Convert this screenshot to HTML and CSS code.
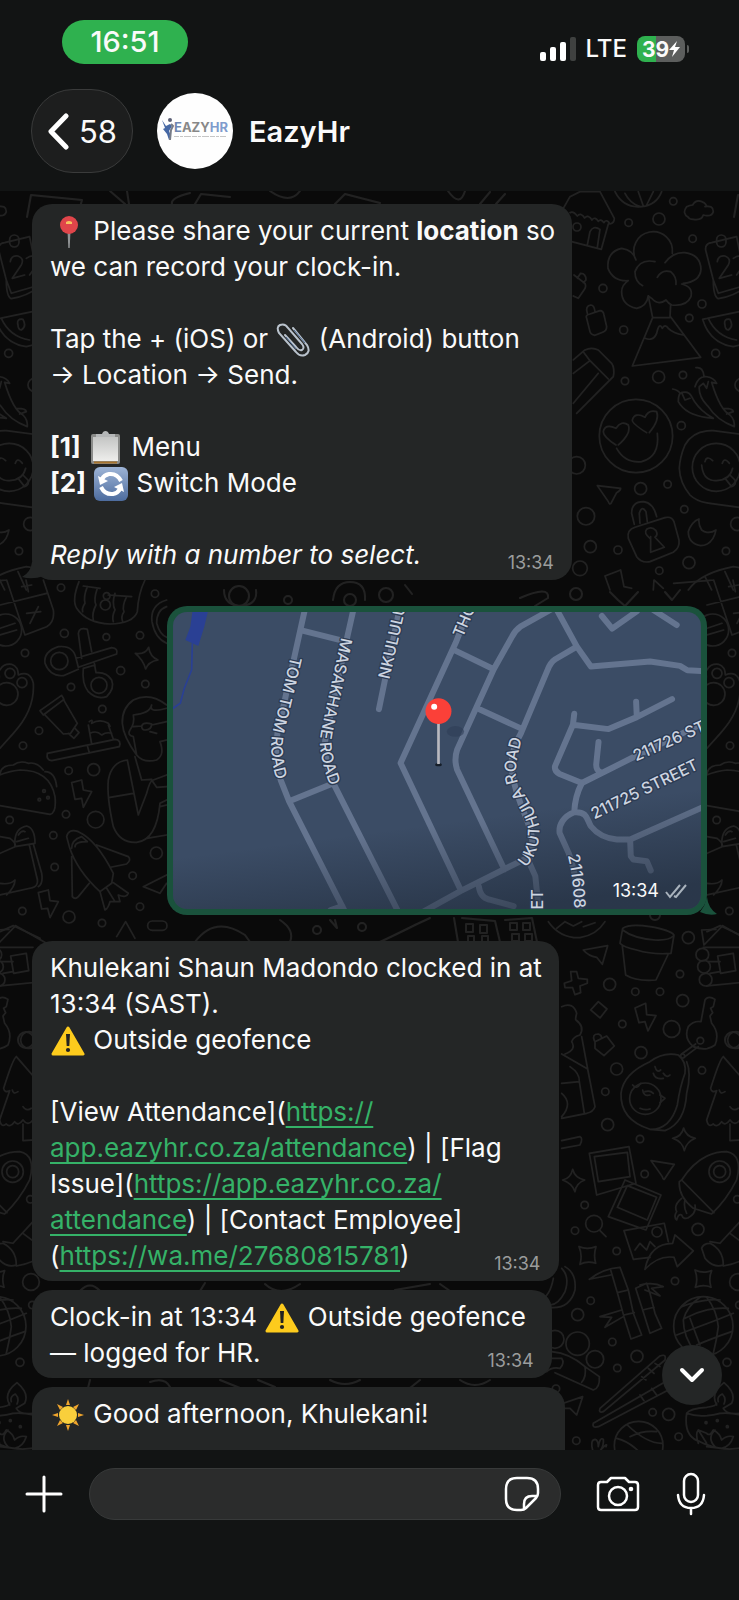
FILE: index.html
```html
<!DOCTYPE html>
<html lang="en">
<head>
<meta charset="utf-8">
<meta name="viewport" content="width=device-width, initial-scale=1">
<title>EazyHr</title>
<link rel="stylesheet" href="styles.css">
</head>
<body>
<svg class="defs" aria-hidden="true">
  <defs>
    <symbol id="warning" viewBox="0 0 34 34">
      <path d="M17 4L32 30H2Z" fill="#fdcb1d" stroke="#fdcb1d" stroke-width="3" stroke-linejoin="round"/>
      <path d="M15 10h4l-.7 12h-2.6z" fill="#222"/><circle cx="17" cy="26" r="2.1" fill="#222"/>
    </symbol>
    <linearGradient id="sky" x2="0" y2="1"><stop offset="0" stop-color="#9db4d6"/><stop offset="1" stop-color="#4d6c9e"/></linearGradient>
    <linearGradient id="paper" x2="0" y2="1"><stop offset="0" stop-color="#c4c5c4"/><stop offset="1" stop-color="#eeeeec"/></linearGradient>
    <linearGradient id="shade" x1=".55" y1=".7" x2=".62" y2="1"><stop offset="0" stop-color="#1c2634" stop-opacity="0"/><stop offset="1" stop-color="#1c2634" stop-opacity=".55"/></linearGradient>
    <g id="doodles">
      <g transform="translate(380 190) scale(.3333)">
        <path d="M550 55L570 20L600 5H660L703 85Q703 100 690 102Q680 85 672 98Q662 85 655 94Q645 78 636 90Q625 72 614 84Q603 66 592 78Q580 62 570 68M685 102L664 178L575 155M622 165L630 125Q640 105 660 118L652 172"/>
        <circle cx="591" cy="111" r="12"/>
        <path d="M705 5Q730 55 785 50Q830 45 845 5M735 10Q750 40 780 50M775 5L790 48M820 5L800 45"/>
        <path d="M925 82Q905 70 920 50Q930 45 938 45Q950 25 972 38Q985 50 975 50Q1000 45 1000 65Q995 82 970 75Q965 92 940 88Q928 88 925 82"/>
        <path d="M768 210A58 58 0 1 1 877 190M855 218Q880 185 915 188Q962 195 963 238Q960 275 910 280M905 282Q940 290 933 320Q920 350 875 345Q865 340 858 330Q835 348 815 325L805 318Q800 350 770 355Q725 345 725 305Q725 285 745 272Q700 275 684 235Q680 185 725 175Q760 180 768 210M825 215Q780 205 765 245Q765 275 788 287M832 262Q845 238 872 245Q890 260 888 283"/>
        <path d="M805 318L818 383H870L872 345M818 383L757 528L962 502L870 378M795 445Q820 455 830 430Q838 395 847 415Q855 400 865 415Q880 430 910 435"/>
        <path d="M977 180Q975 160 995 158L1070 140L1100 290Q1060 320 1015 326Q1000 320 1000 270L977 180M1000 270L1015 310L1100 285M1012 215Q1015 195 1035 198Q1055 205 1045 225L1018 265L1055 255M1060 205Q1090 185 1095 220L1070 255"/>
        <rect x="1010" y="135" width="28" height="36" rx="14"/>
        <path d="M968 388L1150 350M968 388Q990 460 1060 470Q1110 460 1140 440M985 385Q1010 440 1070 450M1035 405Q1030 385 1050 388Q1062 410 1045 420Q1035 418 1035 405"/>
        <path d="M582 255L615 280Q620 290 612 300L595 325L580 318M592 265L602 250Q618 250 618 270L610 278M620 385Q615 375 630 372L660 362Q670 362 672 375L680 410Q680 422 668 427L645 436Q632 434 630 425ZM622 370Q615 348 632 345Q643 345 645 365"/>
        <path d="M580 510L615 480Q635 470 655 480L695 520Q705 535 700 560L685 575L590 670M580 550L630 512L612 488M630 512L685 567M580 640L655 550"/>
        <circle cx="768" cy="738" r="110"/>
        <path d="M708 765Q670 740 670 725Q675 700 708 715Q725 690 745 705Q755 730 715 765M800 728Q755 700 757 690Q765 665 795 682Q805 658 830 665Q840 690 808 728M710 775Q735 820 785 815Q840 800 832 730"/>
        <path d="M948 533Q970 530 972 560M945 590Q955 560 975 560Q1000 560 1010 580L995 577Q1020 660 1050 675Q1065 690 1063 710Q1010 690 985 650Q955 620 958 590L970 580L980 595L985 575M878 597Q895 600 900 610Q925 600 935 620Q955 660 1000 685Q920 680 895 635Q895 610 905 608L915 630L930 625M1030 655Q1060 655 1060 665L1040 672"/>
        <path d="M1100 735L1000 722Q940 720 915 765Q900 800 898 835Q900 880 930 915Q950 935 990 940L1100 955"/>
        <circle cx="1009" cy="832" r="72"/>
        <path d="M975 815Q980 795 998 812M1027 820Q1033 800 1048 820M965 825Q970 875 1010 872Q1050 870 1058 835M1035 865L1055 890Q1070 885 1065 870L1050 855"/>
        <path d="M652 887L722 895Q722 902 710 908L693 940Q688 945 685 935Z"/>
        <path d="M763 1003L755 970Q755 935 790 935Q820 938 830 980M780 1000L778 970Q785 945 798 965L802 995M745 1045Q740 1020 765 1012L855 983Q875 978 882 995L897 1050Q900 1075 880 1087L810 1115Q785 1120 770 1100ZM810 1045Q790 1030 800 1018Q815 1008 828 1022Q835 1035 825 1042L853 1072L812 1087L812 1040"/>
        <path d="M957 987Q935 995 925 1025Q925 1060 962 1067Q1000 1065 1008 1020Q985 1035 965 1020Q955 1005 957 987M675 1158L722 1140L732 1190L755 1195M675 1158L690 1200M820 1200L822 1170L850 1195M925 1200Q960 1150 1060 1130L1090 1135M975 1160L995 1200M1035 1145L1060 1200"/>
        <g><circle cx="746" cy="98" r="11"/><circle cx="837" cy="87" r="18"/><circle cx="880" cy="34" r="11"/><circle cx="938" cy="146" r="11"/><circle cx="669" cy="295" r="12"/><circle cx="966" cy="342" r="12"/><circle cx="928" cy="384" r="11"/><circle cx="731" cy="420" r="12"/><circle cx="1007" cy="490" r="12"/><circle cx="735" cy="573" r="11"/><circle cx="836" cy="561" r="18"/><circle cx="909" cy="555" r="11"/><circle cx="904" cy="707" r="12"/><circle cx="590" cy="826" r="26"/><circle cx="782" cy="896" r="18"/><circle cx="863" cy="883" r="11"/><circle cx="618" cy="979" r="26"/><circle cx="913" cy="958" r="11"/><circle cx="631" cy="1070" r="18"/><circle cx="714" cy="1080" r="12"/><circle cx="1038" cy="1083" r="11"/><circle cx="927" cy="1118" r="18"/><circle cx="838" cy="1142" r="11"/><circle cx="600" cy="1135" r="22"/><circle cx="1072" cy="1002" r="20"/><circle cx="1085" cy="585" r="20"/></g>
      </g>
      <g transform="translate(0 580) scale(.3333)">
        <path d="M20 0L75 165M0 75L140 40M75 165L140 140Q165 125 160 90L130 0M65 20L95 15M78 0L85 35M80 100L122 95M90 130L115 80M0 145L45 130M0 165L50 150M-100 10L20 0"/>
        <circle cx="17" cy="150" r="48"/>
        <path d="M237 5Q215 60 230 85Q260 130 330 132Q400 130 412 95Q415 40 435 0M250 18L300 25M325 45L395 50M262 20Q250 50 255 70Q245 85 248 95M292 25Q280 60 288 75Q275 100 280 120M345 40Q335 70 345 90Q335 110 340 125M380 50Q365 80 372 95Q362 110 368 125"/>
        <circle cx="320" cy="48" r="10"/><circle cx="316" cy="75" r="15"/>
        <path d="M500 60Q450 75 456 125Q465 175 500 190M500 80Q470 90 470 130Q480 165 500 172"/>
        <path d="M235 160Q238 140 262 148L275 215M235 160L245 235M228 235L335 203Q355 205 350 222L235 262ZM228 235Q220 195 175 200Q130 215 135 250Q150 290 190 287L235 268M250 265Q245 310 265 335Q290 360 320 350Q345 325 335 300Q320 275 288 278L283 250M250 265L285 255"/>
        <circle cx="178" cy="243" r="26"/><circle cx="297" cy="316" r="24"/>
        <path d="M446 202Q450 230 474 240Q445 245 437 267Q430 240 406 220Q435 225 446 202Z"/>
        <path d="M0 270Q10 250 35 253Q55 260 55 285Q90 270 100 310Q105 390 40 460L0 505M-100 330Q-110 400 -60 470L0 505"/><circle cx="30" cy="280" r="15"/><circle cx="66" cy="308" r="15"/><circle cx="20" cy="342" r="34"/><circle cx="-18" cy="290" r="16"/>
        <path d="M120 392L185 346L192 358L130 405ZM135 405L190 462L212 460L232 430L190 358M205 460L222 475L237 458L225 445"/>
        <path d="M142 520L345 478Q365 480 358 500L155 542Q138 540 142 520M262 497L268 518M268 425Q280 415 275 430Q300 415 325 430Q335 445 325 435L340 478M265 435L275 492M270 460Q290 450 305 465Q320 455 335 460"/>
        <path d="M500 375Q450 335 400 360Q365 385 367 430Q370 470 410 525M400 405Q405 430 390 450Q380 465 400 470L410 525Q430 550 470 540Q495 525 480 485L500 480M400 405Q450 400 455 375Q445 400 500 385M425 438Q430 425 455 432Q455 450 435 450Q425 450 425 438M400 440L425 438M455 435L500 425M450 455L470 460M382 540Q335 545 325 600Q320 650 340 740Q360 790 410 787Q470 780 480 670L500 660M382 540L415 705L440 640Q450 600 460 600L500 585M405 530L425 600L455 598M330 652L400 640M455 600L470 622L500 620M440 775L500 765M480 680L500 675"/>
        <path d="M-60 640Q-30 580 60 570Q150 570 165 650Q170 700 150 703L-40 670M0 580Q5 555 40 555Q60 540 85 550Q110 545 130 570M135 575Q165 575 170 620"/><circle cx="118" cy="659" r="4"/><circle cx="132" cy="633" r="4"/><circle cx="144" cy="653" r="4"/>
        <path d="M215 608L245 600L250 630L275 635L250 682L245 655L225 658ZM115 938L145 930L150 962L175 965L150 1013L143 985L125 987Z"/>
        <path d="M200 770Q205 745 235 755Q290 780 340 880L335 910L300 935Q230 870 208 800ZM215 805Q215 780 245 770L262 785Q225 785 225 800M290 795L385 830Q395 840 380 852L332 862M215 830L217 950Q225 960 235 950L268 910M300 935L315 990Q325 985 330 965L360 965L355 945Q380 955 385 940L340 908M320 925L345 965"/>
        <path d="M0 770L30 775Q50 790 45 800Q40 745 80 738Q105 745 105 790L45 800L0 820M55 765Q65 750 75 755M50 785L85 775M88 795L110 890Q120 920 90 925L0 945M100 792L125 880Q130 910 115 920M0 910Q30 915 45 900Q45 920 20 945"/>
        <path d="M430 920L500 885M430 920L480 940L500 910M350 1070L377 1025L405 1075M0 1055L40 1037L120 1075"/><rect x="443" y="1023" width="58" height="28" rx="14"/>
        <circle cx="183" cy="23" r="11"/><circle cx="465" cy="41" r="11"/><circle cx="193" cy="160" r="12"/><circle cx="319" cy="171" r="10"/><circle cx="420" cy="166" r="11"/><circle cx="75" cy="219" r="11"/><circle cx="362" cy="272" r="12"/><circle cx="213" cy="321" r="11"/><circle cx="436" cy="312" r="11"/><circle cx="307" cy="387" r="11"/><circle cx="117" cy="452" r="11"/><circle cx="69" cy="497" r="11"/><circle cx="206" cy="572" r="11"/><circle cx="281" cy="569" r="18"/><circle cx="198" cy="703" r="11"/><circle cx="287" cy="719" r="25"/><circle cx="29" cy="720" r="11"/><circle cx="160" cy="766" r="11"/><circle cx="164" cy="861" r="11"/><circle cx="469" cy="819" r="18"/><circle cx="398" cy="887" r="11"/><circle cx="67" cy="993" r="11"/><circle cx="207" cy="1011" r="18"/><circle cx="306" cy="1029" r="11"/><circle cx="420" cy="980" r="11"/>
      </g>
      <g transform="translate(540 920) scale(.3333)">
        <path d="M25 5Q60 55 120 53Q170 45 195 5M75 5L100 18L125 5M50 25L75 5M130 20L165 8"/>
        <path d="M248 25Q270 10 330 20Q390 30 402 45L393 100Q340 105 290 90Q250 82 240 70ZM248 30Q280 55 345 60Q385 62 400 48M247 78L257 165Q290 185 348 180L385 102"/>
        <path d="M485 30L528 28M485 30L492 75L548 17L650 75M490 82H600M505 125L540 125M510 160L540 155M500 198L650 183M533 108L580 100L587 152L542 160Z"/><circle cx="487" cy="104" r="19"/><circle cx="492" cy="140" r="19"/><circle cx="497" cy="179" r="19"/>
        <path d="M130 90L203 77L187 133L170 112Q145 108 130 90ZM92 155H110L115 175L142 178V190L120 198L122 218L105 224L98 203L75 203L73 190L95 182Z"/>
        <path d="M175 245L201 267L180 294L152 270ZM165 365L200 348L223 378L192 407L165 385ZM163 362Q155 342 175 342Q185 345 185 355M285 264L317 250L320 284L348 287L324 333L315 305L297 308Z"/>
        <path d="M483 305L495 240Q505 225 525 238L520 260L512 265L518 278L510 288L515 310Q540 340 525 375Q500 395 460 380Q430 355 445 320Q460 302 483 305M467 372L425 402M475 380L435 410"/><circle cx="481" cy="362" r="10"/><circle cx="428" cy="408" r="6"/>
        <path d="M330 425Q370 395 415 405Q440 425 435 460Q420 500 412 555Q390 630 330 628Q240 600 243 520Q250 460 330 425M440 425Q455 460 440 520Q435 610 375 632L330 628"/><circle cx="316" cy="536" r="47"/>
        <path d="M345 440Q350 460 362 450M340 460Q345 480 370 475M370 460Q380 475 390 465M308 510Q310 530 330 525M315 515Q330 510 340 520M300 565Q315 572 330 567M278 495Q290 510 302 490M360 525L375 535L360 548"/>
        <path d="M65 260Q100 245 110 280Q105 300 108 300Q135 320 120 345Q100 350 95 365Q110 390 75 402M65 402L143 447L165 560Q160 575 140 580L65 595M125 350L143 447M90 440Q120 460 118 485L65 490M118 485L133 580M65 520Q100 550 65 590M65 662L120 650Q130 655 120 675L65 685"/>
        <path d="M550 410L650 525M550 410Q540 415 512 505Q515 520 530 512L500 600Q505 625 520 612Q530 625 545 605Q555 620 570 600Q585 620 600 600L650 620M570 612V662L630 658M538 510Q540 525 555 515M570 560Q580 575 595 565"/>
        <path d="M431 624Q438 650 466 655Q440 665 433 692Q428 665 398 655Q425 650 431 624ZM98 748Q105 775 134 780Q108 790 105 815Q97 790 68 780Q92 775 98 748ZM117 980Q142 990 168 980Q160 1005 167 1030Q142 1022 120 1033Q128 1005 117 980ZM465 1050Q490 1062 515 1052Q505 1075 513 1102Q490 1092 466 1102Q475 1078 465 1050Z"/>
        <path d="M148 700L267 680L288 790L170 825ZM163 710L262 697L270 770L175 785ZM255 780L363 825L318 930L205 890ZM262 797L350 832L322 900L232 862ZM252 932L373 910L385 965M252 932L280 1018L330 1012M285 990L300 970L320 990L330 965L345 980"/><circle cx="351" cy="936" r="15"/>
        <path d="M333 722L403 733L373 778Q370 780 367 770ZM315 1048Q330 970 398 970L405 945L460 993L412 1040L402 1012Q355 1005 315 1048M180 932L198 950"/><circle cx="162" cy="911" r="25"/>
        <path d="M425 780Q480 695 560 695Q610 705 590 780Q560 840 515 882L460 865Q415 830 418 785ZM425 780L522 878M425 835Q400 855 410 875Q400 890 410 900Q415 880 425 885Q430 900 445 893Q470 880 465 855M435 840Q430 860 440 880"/><circle cx="539" cy="755" r="32"/><circle cx="539" cy="755" r="18"/>
        <path d="M485 985Q490 970 510 970Q550 990 550 1035Q520 1045 495 1015ZM510 965L540 970L600 905M550 1038Q600 1030 640 1000M570 940L610 970"/>
        <path d="M75 1040Q110 1060 105 1110Q90 1165 35 1163M65 1045Q90 1070 75 1115Q55 1155 30 1155M40 1075Q30 1130 0 1140"/>
        <path d="M148 1078Q190 1045 240 1042L265 1110L280 1180L305 1245L273 1257L252 1190L232 1118L212 1050M232 1118L265 1110M252 1185L283 1178M148 1078L212 1065M287 1105L320 1090L330 1120L345 1180L365 1225L330 1240L308 1170L287 1105M308 1170L342 1162M300 1095Q340 1085 370 1100L335 1105L360 1128L315 1110M245 1170L180 1190L215 1192L195 1222L250 1190"/>
        <circle cx="490" cy="1219" r="89"/>
        <path d="M425 1160Q490 1135 540 1140M435 1195Q500 1160 565 1165M410 1245L530 1200L580 1180M470 1275Q530 1250 575 1235M480 1132Q440 1160 430 1200Q430 1250 465 1295M500 1132Q530 1170 535 1220Q530 1260 520 1300M450 1195Q470 1250 480 1275"/>
        <g><circle cx="445" cy="53" r="18"/><circle cx="420" cy="162" r="11"/><circle cx="209" cy="193" r="18"/><circle cx="286" cy="215" r="11"/><circle cx="360" cy="215" r="11"/><circle cx="428" cy="242" r="18"/><circle cx="247" cy="312" r="11"/><circle cx="395" cy="327" r="25"/><circle cx="303" cy="398" r="18"/><circle cx="588" cy="360" r="25"/><circle cx="230" cy="447" r="18"/><circle cx="486" cy="451" r="11"/><circle cx="196" cy="515" r="11"/><circle cx="203" cy="614" r="18"/><circle cx="300" cy="657" r="11"/><circle cx="314" cy="762" r="11"/><circle cx="134" cy="855" r="11"/><circle cx="105" cy="932" r="11"/><circle cx="230" cy="993" r="11"/><circle cx="474" cy="928" r="18"/><circle cx="592" cy="838" r="11"/><circle cx="405" cy="1083" r="11"/><circle cx="152" cy="1142" r="11"/><circle cx="113" cy="1184" r="18"/><circle cx="594" cy="1086" r="25"/><circle cx="217" cy="1266" r="11"/><circle cx="598" cy="1155" r="11"/></g>
      </g>
      <g transform="translate(540 1280) scale(.3333)">
        <circle cx="113" cy="191" r="35"/><circle cx="165" cy="238" r="26"/><circle cx="45" cy="178" r="27"/><circle cx="291" cy="229" r="18"/><circle cx="232" cy="264" r="11"/><circle cx="386" cy="403" r="18"/><circle cx="338" cy="397" r="11"/><circle cx="416" cy="470" r="11"/><circle cx="109" cy="482" r="11"/><circle cx="561" cy="247" r="12"/><circle cx="48" cy="326" r="11"/><circle cx="296" cy="497" r="73"/>
        <path d="M20 275Q35 260 60 265Q75 250 65 235L35 235M35 215Q90 220 135 260L178 290Q180 325 160 330L45 278M135 260Q140 290 125 307M70 370L128 350L110 405L90 385L70 385M180 385L360 228Q380 220 375 240L190 395Q175 400 180 385M160 430L385 300M385 330L175 440Q155 445 160 430M305 290L318 300M325 265L342 280M345 250L360 260M300 345L312 362M335 325L350 345"/>
        <path d="M262 435Q320 490 365 490M270 470Q310 450 350 455M230 475Q290 490 330 560M158 510Q150 480 165 478Q175 480 175 500Q180 470 190 478Q192 495 182 510Q205 485 198 500"/>
        <path d="M440 400Q450 385 500 382Q530 378 530 370M440 400Q430 470 480 485Q550 520 620 500M440 400Q480 415 540 400Q590 395 650 420M530 375Q510 340 552 308Q590 340 575 370L550 385Q560 405 600 400M535 365Q530 350 547 342Q560 355 552 372M475 490Q465 460 475 450L500 460Q510 470 520 450Q540 460 545 480Q560 465 580 470Q570 500 545 505L500 500M500 490L475 450M525 500Q500 475 525 450"/><circle cx="498" cy="428" r="3"/><circle cx="532" cy="422" r="3"/><circle cx="562" cy="440" r="3"/>
      </g>
      <g stroke-width="2">
        <path d="M27 217L31 195L82 200L80 207M110 191L125 204M127 191L129 204M172 204Q170 198 190 193M195 204L201 194L230 197M270 191Q290 205 300 191M335 204L345 194L380 203M448 191Q460 208 465 191M480 204L490 192M496 204L505 194"/>
        <path d="M224 590Q224 606 242 606Q258 604 256 590M333 600Q335 582 350 582Q366 582 365 600M405 585L412 594M520 598Q550 585 548 598L535 606M610 592L618 600L625 606L638 592M665 592L672 600L680 590"/>
        <circle cx="239" cy="596" r="10"/><circle cx="350" cy="600" r="6"/><circle cx="386" cy="595" r="7"/>
        <path d="M454 918L458 942M462 918L495 921L500 942M466 924h7v8h-7zM480 925h7v8h-7zM468 936h6v6h-6zM482 936h6v6h-6zM505 920L532 918L537 942M510 923h7v7h-7zM523 923h7v7h-7zM512 934h7v7h-7zM525 934h7v7h-7zM195 942Q215 915 245 935L250 942M280 920Q295 930 290 942M335 920L337 928L330 920M380 942Q395 935 415 925L430 918"/>
        <path d="M80 1291Q90 1280 100 1291M200 1291L205 1283M265 1284Q280 1298 300 1284M395 1290L430 1284M440 1284L450 1291M90 1380L88 1388M150 1382Q165 1377 170 1387M220 1380L240 1388M258 1380L275 1387M330 1380Q345 1388 360 1380M420 1380L410 1388M460 1380Q475 1390 490 1380"/>
        <circle cx="288" cy="600" r="4"/><circle cx="317" cy="930" r="4"/><circle cx="362" cy="927" r="4"/><circle cx="576" cy="594" r="6"/><circle cx="655" cy="915" r="5"/><circle cx="26" cy="1040" r="8"/>
      </g>
    </g>
    <pattern id="wallpaper" width="707" height="1409" patternUnits="userSpaceOnUse">
      <g transform="translate(0 -191)" fill="none" stroke="#222" stroke-width="5" stroke-linejoin="round" stroke-linecap="round">
        <use href="#doodles" x="-707"/><use href="#doodles"/><use href="#doodles" x="707"/>
      </g>
    </pattern>
  </defs>
</svg>

<div class="phone">
  <header class="top">
    <div class="status">
      <span class="clock">16:51</span>
      <div class="signals">
        <svg width="36" height="24" viewBox="0 0 36 24" aria-hidden="true"><rect y="15" width="6" height="9" rx="2" fill="#fff"/><rect x="10" y="10" width="6" height="14" rx="2" fill="#fff"/><rect x="20" y="5" width="6" height="19" rx="2" fill="#fff"/><rect x="30" width="6" height="24" rx="2" fill="#3f4140"/></svg>
        <span class="network">LTE</span>
        <span class="battery"><span>39</span><svg width="11" height="16" viewBox="0 0 11 16" aria-hidden="true"><path d="M8 0L0 9H5L3 16L11 6H6Z" fill="#fff"/></svg></span>
      </div>
    </div>
    <div class="contact">
      <button class="back" aria-label="Back, 58 unread"><svg width="22" height="37" viewBox="0 0 22 37" aria-hidden="true"><path d="M19 3L4 18.500L19 34" fill="none" stroke="#fff" stroke-width="5" stroke-linecap="round" stroke-linejoin="round"/></svg>58</button>
      <svg class="avatar" width="76" height="76" viewBox="0 0 76 76" role="img" aria-label="EazyHR logo">
        <circle cx="38" cy="38" r="38" fill="#fefefe"/>
        <circle cx="13" cy="27" r="2" fill="#5b5f75"/><path d="M5 27L9 33L13 31L15 33L12 38L14 43L12 47L10 41L6 36L8 35Z" fill="#4668a5"/><path d="M14 31L16 33L14 37L13 47" stroke="#777c88" stroke-width="2" fill="none"/>
        <text x="17" y="39" class="logo"><tspan fill="#6f87b3">E</tspan><tspan fill="#888">AZY</tspan><tspan fill="#7f9ccd">HR</tspan></text>
        <path d="M17 43.500H69" stroke="#c6c6c6" stroke-width="1" stroke-dasharray="5 1 3 1 7 1"/>
      </svg>
      <h1>EazyHr</h1>
    </div>
  </header>

  <main class="chat">
    <svg class="wall" width="100%" height="100%" aria-hidden="true"><rect width="100%" height="100%" fill="url(#wallpaper)"/></svg>

    <article class="bubble first">
      <p><svg class="emoji" viewBox="0 0 34 34" role="img" aria-label="Pin"><path d="M16.500 16h3l-.8 17h-1.400z" fill="#8f9294"/><circle cx="18" cy="10" r="9" fill="#e0454a"/><path d="M15 7q3-2 6 0v2h-6z" fill="#f6c45e"/></svg> Please share your current <strong>location</strong> so<br>we can record your clock-in.<br><br>Tap the + (iOS) or <svg class="emoji" viewBox="0 0 34 34" role="img" aria-label="Paperclip"><path d="M17 5L31 22Q35 29 29 32Q24 34 20 29L3 10Q0 4 4 2Q9 0 12 5L26 21Q29 25 26 27Q23 28 20 24L9 12" fill="none" stroke="#b9c2cc" stroke-width="2" stroke-linecap="round"/><path d="M18 7L29 20M10 14L20 26" stroke="#4a6891" stroke-width="1"/></svg> (Android) button<br>→ Location → Send.<br><br><strong>[1]</strong> <svg class="emoji" viewBox="0 0 34 34" role="img" aria-label="Clipboard"><rect x="2" y="3" width="29" height="30" rx="2" fill="#8b8c8a"/><rect x="4" y="6" width="25" height="24" fill="url(#paper)"/><path d="M5 31.500H28" stroke="#a6742e" stroke-width="2"/><path d="M7 3H13Q14 0 16.500 0Q19 0 20 3H26V6H7Z" fill="#b5b7b8"/></svg> Menu<br><strong>[2]</strong> <svg class="emoji" viewBox="0 0 34 34" role="img" aria-label="Switch"><rect x="0" y="0" width="34" height="34" rx="6" fill="url(#sky)"/><path d="M27 14Q23 6 15 7Q10 8 8 12M7 20Q11 28 19 27Q24 26 26 22" fill="none" stroke="#fff" stroke-width="4"/><path d="M4 9L6 18L14 14ZM30 25L28 16L20 20Z" fill="#fff"/></svg> Switch Mode<br><br><em>Reply with a number to select.</em></p>
      <time>13:34</time>
      <svg class="tail" width="22" height="18" viewBox="0 0 22 18" aria-hidden="true"><path d="M10 0Q9 10 0 15Q10 18 22 14V0Z" fill="#242626"/></svg>
    </article>

    <article class="bubble sent">
      <svg class="map" viewBox="66 66 1587 894" role="img" aria-label="Shared location map">
        <rect x="66" y="66" width="1587" height="894" fill="#3b4c65"/>
        <path d="M125 60H172L160 110L142 168L103 150L118 110Z" fill="#2a4094"/><path d="M124 160L122 240L100 295L88 340L60 360" fill="none" stroke="#2a4094" stroke-width="5"/>
        <g fill="none" stroke="#64748f" stroke-width="18" stroke-linejoin="round" stroke-linecap="round">
          <path d="M462 60L380 430Q368 510 390 572L415 635L582 965M540 962L575 950M455 122L575 152M608 60L590 140L525 440Q515 500 550 585L742 965M415 635L550 580M745 66L685 358"/>
          <path d="M955 60L915 160L750 520L930 900M820 966L930 905L1060 840L1125 808M1200 60L1110 110Q1095 120 1085 140L1030 238L920 480Q910 510 920 540L1062 840M910 180L1030 238M990 360L1110 415"/>
          <path d="M1220 60L1280 170L1322 230L1500 215L1590 228L1612 241L1660 244M1280 170L1215 208Q1200 218 1192 240L1112 430C1070 500 1080 560 1110 640S1160 750 1135 815L1155 860L1166 966M985 890Q990 925 1015 930L1090 950"/>
          <path d="M1355 78L1386 116L1460 64M1510 60L1580 105M1272 372L1268 405L1375 418L1460 382L1566 328M1458 336L1460 380M1268 405L1214 530Q1212 545 1228 553L1295 580L1445 505L1660 400M1345 457L1338 525Q1338 543 1352 548"/>
          <path d="M1295 580Q1274 620 1272 668C1240 680 1225 705 1228 730L1255 790C1270 830 1285 900 1288 966M1272 668C1312 665 1310 690 1322 710Q1350 745 1400 750H1440L1660 652M1440 750L1442 800L1450 810L1490 815L1502 843"/>
        </g>
        <rect x="66" y="66" width="1587" height="894" fill="url(#shade)"/>
        <defs>
          <path id="r1" d="M420 198L365 428Q350 500 390 610"/><path id="r2" d="M572 142L510 430Q498 500 555 630"/><path id="r3" d="M716 270L768 40"/><path id="r4" d="M937 145L985 30"/>
          <path id="r5" d="M1126 834Q1168 790 1168 715C1155 640 1098 600 1096 545Q1100 490 1130 400"/><path id="r6" d="M1458 515L1760 382"/><path id="r7" d="M1332 690L1720 502"/><path id="r8" d="M1252 798Q1276 880 1275 1100"/><path id="r9" d="M1178 960V860"/>
        </defs>
        <g class="roads">
          <text><textPath href="#r1">TOM TOM ROAD</textPath></text><text><textPath href="#r2">MASAKHANE ROAD</textPath></text><text><textPath href="#r3">NKULULU</textPath></text><text><textPath href="#r4">THO</textPath></text><text><textPath href="#r5">UKUTHULA ROAD</textPath></text><text><textPath href="#r6">211726 ST</textPath></text><text><textPath href="#r7">211725 STREET</textPath></text><text><textPath href="#r8">211608</textPath></text><text><textPath href="#r9">ET</textPath></text>
        </g>
        <ellipse cx="915" cy="425" rx="26" ry="16" fill="#2e3e57" opacity=".6"/><ellipse cx="864" cy="525" rx="10" ry="5" fill="#151d28"/><path d="M864 400V523" stroke="#b9b9bf" stroke-width="8"/><circle cx="864" cy="364" r="39" fill="#fb4038"/><circle cx="851" cy="351" r="9" fill="#fff"/>
      </svg>
      <span class="receipt"><time>13:34</time><svg width="23" height="15" viewBox="0 0 23 15" role="img" aria-label="Delivered"><path d="M1 8L5 13L15 1M9 12L11 13L21 1" fill="none" stroke="#a9b3bd" stroke-width="2"/></svg></span>
      <svg class="tail" width="22" height="18" viewBox="0 0 22 18" aria-hidden="true"><path d="M12 0Q13 11 22 17Q14 19 5 15L9 9Z" fill="#1a523c"/></svg>
    </article>

    <article class="bubble second">
      <p>Khulekani Shaun Madondo clocked in at<br>13:34 (SAST).<br><svg class="emoji" role="img" aria-label="Warning"><use href="#warning"/></svg> Outside geofence<br><br>[View Attendance](<a href="https://app.eazyhr.co.za/attendance">https://<br>app.eazyhr.co.za/attendance</a>) | [Flag<br>Issue](<a href="https://app.eazyhr.co.za/attendance">https://app.eazyhr.co.za/<br>attendance</a>) | [Contact Employee]<br>(<a href="https://wa.me/27680815781">https://wa.me/27680815781</a>)</p>
      <time>13:34</time>
    </article>

    <article class="bubble third">
      <p>Clock-in at 13:34 <svg class="emoji" role="img" aria-label="Warning"><use href="#warning"/></svg> Outside geofence<br>— logged for HR.</p>
      <time>13:34</time>
    </article>

    <article class="bubble fourth">
      <p><svg class="emoji" viewBox="0 0 34 34" role="img" aria-label="Sun"><path d="M17 1L19 7H15ZM17 33L19 27H15ZM1 17L7 15V19ZM33 17L27 15V19ZM6 6L12 9L9 12ZM28 6L22 9L25 12ZM6 28L12 25L9 22ZM28 28L22 25L25 22Z" fill="#f0a52c"/><circle cx="17" cy="17" r="9" fill="#f9cf3c"/></svg> Good afternoon, Khulekani!<br><br></p>
    </article>

    <button class="latest" aria-label="Scroll to latest"><svg width="26" height="16" viewBox="0 0 26 16" aria-hidden="true"><path d="M3 3L13 13L23 3" fill="none" stroke="#fff" stroke-width="4" stroke-linecap="round" stroke-linejoin="round"/></svg></button>
  </main>

  <footer class="composer">
    <button aria-label="Attach"><svg width="38" height="38" viewBox="0 0 38 38" aria-hidden="true"><path d="M19 2V36M2 19H36" stroke="#fff" stroke-width="3" stroke-linecap="round"/></svg></button>
    <div class="field">
      <input type="text" aria-label="Message">
      <button aria-label="Stickers"><svg width="36" height="36" viewBox="0 0 36 36" aria-hidden="true"><path d="M13 2H23Q34 2 34 13V17Q34 20 32 22L22 32Q20 34 17 34H13Q2 34 2 23V13Q2 2 13 2ZM20 33V28Q20 20 28 20H33" fill="none" stroke="#fff" stroke-width="2.500" stroke-linejoin="round"/></svg></button>
    </div>
    <button class="camera" aria-label="Camera"><svg width="44" height="36" viewBox="0 0 44 36" aria-hidden="true"><g fill="none" stroke="#fff" stroke-width="2.500" stroke-linejoin="round"><path d="M5 6H11L15 2H29L33 6H39Q42 6 42 9V31Q42 34 39 34H5Q2 34 2 31V9Q2 6 5 6Z"/><circle cx="22" cy="20" r="9"/></g><circle cx="35" cy="13" r="2.300" fill="#fff"/></svg></button>
    <button aria-label="Voice message"><svg width="30" height="44" viewBox="0 0 30 44" aria-hidden="true"><g fill="none" stroke="#fff" stroke-width="2.500" stroke-linecap="round"><rect x="8" y="2" width="14" height="28" rx="7"/><path d="M2 23Q3 36 15 36Q27 36 28 23M15 36V42"/></g></svg></button>
  </footer>
</div>
</body>
</html>
```
FILE: styles.css
```css
* { box-sizing: border-box; }

body {
  margin: 0;
  background: #0a0a0a;
  color: #fafafa;
  font-family: Inter, "Liberation Sans", sans-serif;
}

button {
  display: flex;
  align-items: center;
  justify-content: center;
  padding: 0;
  border: 0;
  background: none;
  color: inherit;
  font: inherit;
}

svg { display: block; }
.defs { position: absolute; width: 0; height: 0; }

.phone {
  display: flex;
  flex-direction: column;
  height: 100vh;
  overflow: hidden;
}

.top {
  flex: none;
  padding: 20px 54px 18px 31px;
  background: #121414;
}

.status {
  display: flex;
  justify-content: space-between;
  padding-left: 31px;
}

.clock {
  width: 126px;
  border-radius: 22px;
  background: #2fb14f;
  font-size: 29px;
  font-weight: 500;
  line-height: 44px;
  text-align: center;
}

.signals {
  display: flex;
  align-items: center;
  gap: 10px;
  padding-top: 14px;
}

.network { font-size: 24px; font-weight: 500; line-height: 30px; }

.battery {
  position: relative;
  display: flex;
  align-items: center;
  justify-content: center;
  width: 48px;
  height: 26px;
  border-radius: 8px;
  background: linear-gradient(90deg, #2fb14f 39%, #5c5e5d 39%);
  font-size: 21px;
  font-weight: 700;
}

.battery::after {
  content: "";
  position: absolute;
  right: -4px;
  width: 2px;
  height: 8px;
  border-radius: 0 2px 2px 0;
  background: #5c5e5d;
}

.contact {
  display: flex;
  align-items: center;
  padding-top: 25px;
}

.back {
  gap: 10px;
  width: 102px;
  height: 84px;
  border: 1px solid #3a3b3b;
  border-radius: 42px;
  background: #1d1e1e;
  font-size: 31px;
}

.avatar { margin: 0 16px 0 24px; }
.logo { font-size: 13px; font-weight: 700; }

h1 { margin: 0; font-size: 29px; font-weight: 600; }

.chat {
  position: relative;
  display: flex;
  flex: 1;
  flex-direction: column;
  align-items: flex-start;
  gap: 9px;
  min-height: 0;
  padding: 13px 32px 0;
  overflow: hidden;
  background: #0a0a0a;
}

.wall { position: absolute; inset: 0; }

.bubble {
  position: relative;
  display: grid;
  flex: none;
  padding: 9px 12px 7px 18px;
  border-radius: 20px;
  background: #242626;
}

.bubble p {
  grid-area: 1 / 1;
  margin: 0;
  font-size: 26px;
  line-height: 36px;
}

.bubble > time {
  grid-area: 1 / 1;
  align-self: end;
  justify-self: end;
  margin-right: 6px;
  color: #9b9d9d;
  font-size: 18px;
  line-height: 20px;
}

.first { width: 80%; }
.second { width: 78%; }
.third { width: 77%; }
.fourth { width: 79%; }

.first .tail { position: absolute; left: -10px; bottom: 0; }

.emoji {
  display: inline-block;
  width: 34px;
  height: 34px;
  margin: -2px 1px;
  vertical-align: -7px;
}

a {
  color: #35b268;
  text-decoration-thickness: 2px;
  text-underline-offset: 5px;
}

.sent {
  align-self: flex-end;
  width: 80%;
  margin: 17px 0;
  padding: 6px;
  background: #1a523c;
}

.map { width: 100%; border-radius: 14px; }

.roads {
  fill: #ccd4e0;
  stroke: #2c3b52;
  stroke-width: 8px;
  stroke-linejoin: round;
  paint-order: stroke;
  font-size: 48px;
  font-weight: 500;
}

.receipt {
  position: absolute;
  right: 19px;
  bottom: 14px;
  display: flex;
  align-items: center;
  gap: 6px;
  font-size: 18px;
  line-height: 20px;
}

.sent .tail { position: absolute; right: -10px; bottom: 0; }

.latest {
  position: absolute;
  right: 17px;
  bottom: 45px;
  width: 60px;
  height: 60px;
  border-radius: 50%;
  background: #242626;
}

.composer {
  display: flex;
  flex: none;
  align-items: flex-start;
  height: 150px;
  padding: 18px 33px 0 25px;
  background: #121414;
}

.composer button { height: 52px; }

.field {
  display: flex;
  flex: 1;
  align-items: center;
  min-width: 0;
  height: 52px;
  margin: 0 35px 0 26px;
  padding-right: 20px;
  border: 1px solid #383a3a;
  border-radius: 26px;
  background: #2b2c2c;
}

.field input {
  flex: 1;
  min-width: 0;
  height: 48px;
  padding: 0 20px;
  border: 0;
  outline: 0;
  background: none;
  color: inherit;
  font: inherit;
  font-size: 25px;
}

.camera { margin-right: 36px; }
```
